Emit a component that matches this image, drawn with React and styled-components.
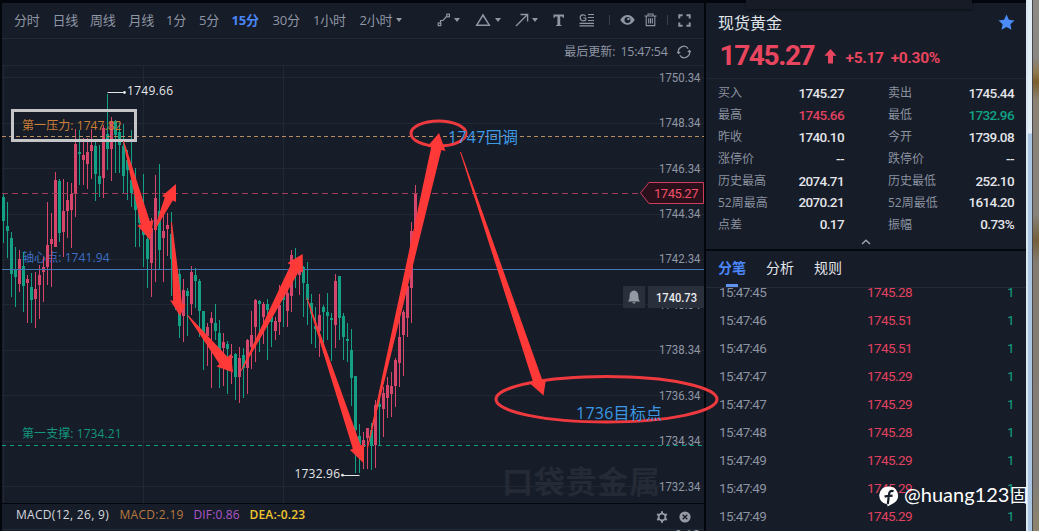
import { Fragment } from "react";
import styled, { createGlobalStyle } from "styled-components";

const periods = [
  { label: "分时", width: 26 },
  { label: "日线", width: 25 },
  { label: "周线", width: 26 },
  { label: "月线", width: 25 },
  { label: "1分", width: 20.5 },
  { label: "5分", width: 20 },
  { label: "15分", width: 28.5, active: true },
  { label: "30分", width: 28 },
  { label: "1小时", width: 34 },
  { label: "2小时", width: 33 },
];

// direction, high, body top, body bottom, low
const candles = [
  ["g", 193, 197, 221, 243], ["g", 202, 226, 231, 258], ["g", 232, 238, 274, 297],
  ["g", 247, 270, 277, 307], ["r", 250, 259, 284, 292], ["g", 252, 266, 286, 312],
  ["r", 275, 279, 283, 323], ["g", 273, 287, 300, 323], ["r", 272, 289, 299, 328],
  ["r", 265, 275, 285, 319], ["r", 257, 267, 272, 302], ["r", 202, 245, 267, 285],
  ["r", 213, 239, 244, 287], ["r", 172, 180, 247, 247], ["g", 179, 181, 233, 242],
  ["r", 179, 211, 232, 257], ["r", 182, 200, 211, 238], ["r", 183, 194, 210, 248],
  ["r", 129, 144, 193, 217], ["g", 130, 152, 154, 185], ["r", 138, 155, 160, 185],
  ["r", 138, 152, 164, 189], ["r", 129, 145, 151, 179], ["g", 142, 146, 174, 201],
  ["g", 145, 176, 184, 197], ["r", 125, 128, 178, 198], ["g", 94, 134, 149, 170],
  ["r", 117, 121, 149, 181], ["g", 120, 121, 135, 173], ["g", 123, 132, 145, 173],
  ["g", 124, 146, 176, 194], ["g", 150, 160, 170, 200], ["g", 130, 180, 193, 207],
  ["g", 168, 188, 210, 247], ["g", 197, 212, 223, 247], ["g", 174, 210, 235, 267],
  ["g", 225, 239, 259, 288], ["r", 218, 228, 263, 297], ["r", 175, 198, 230, 282],
  ["g", 164, 211, 250, 269], ["r", 210, 231, 238, 282], ["r", 213, 225, 229, 256],
  ["g", 212, 234, 259, 296], ["g", 255, 265, 300, 310], ["g", 270, 274, 326, 338],
  ["r", 279, 290, 316, 342], ["g", 288, 291, 296, 336], ["r", 266, 272, 304, 315],
  ["g", 268, 275, 281, 308], ["g", 279, 281, 311, 337], ["g", 311, 311, 335, 370],
  ["r", 323, 327, 336, 366], ["r", 312, 318, 323, 388], ["g", 304, 323, 331, 340],
  ["g", 320, 333, 357, 388], ["r", 333, 342, 348, 386], ["g", 341, 344, 349, 394],
  ["r", 344, 356, 358, 384], ["g", 353, 354, 377, 400], ["r", 347, 358, 377, 403],
  ["g", 348, 355, 368, 398], ["r", 339, 340, 368, 394], ["r", 311, 335, 347, 369],
  ["r", 299, 300, 327, 362], ["g", 300, 301, 304, 352], ["r", 302, 304, 317, 344],
  ["g", 299, 304, 310, 360], ["g", 307, 316, 322, 347], ["r", 317, 321, 331, 340],
  ["r", 285, 305, 322, 335], ["g", 283, 295, 300, 327], ["r", 277, 293, 311, 327],
  ["r", 250, 255, 296, 312], ["g", 248, 263, 270, 288], ["r", 257, 260, 275, 295],
  ["g", 266, 267, 283, 317], ["g", 262, 284, 300, 325], ["g", 294, 303, 314, 344],
  ["g", 307, 326, 329, 348], ["r", 294, 315, 331, 357], ["g", 305, 307, 312, 353],
  ["g", 293, 312, 316, 340], ["g", 313, 318, 320, 361], ["r", 274, 281, 325, 348],
  ["g", 276, 276, 318, 340], ["g", 313, 316, 337, 360], ["g", 323, 339, 341, 362],
  ["g", 329, 350, 378, 406], ["g", 376, 376, 430, 473], ["g", 424, 436, 445, 473],
  ["r", 432, 440, 447, 469], ["r", 428, 428, 438, 469], ["g", 423, 430, 445, 470],
  ["r", 400, 405, 445, 468], ["g", 390, 404, 407, 445], ["r", 387, 393, 409, 437],
  ["r", 377, 385, 398, 418], ["r", 372, 386, 394, 417], ["r", 358, 360, 386, 407],
  ["r", 315, 337, 363, 387], ["r", 310, 312, 335, 376], ["r", 283, 286, 318, 337],
  ["r", 222, 231, 288, 323], ["r", 185, 193, 237, 253],
];

const axisPrices = [
  "1750.34", "1748.34", "1746.34", "1744.34", "1742.34",
  "1740.34", "1738.34", "1736.34", "1734.34", "1732.34",
];

// tail, left barb, tip, right barb
const arrows = [
  [[123, 141], [137.5, 225.5], [150, 240], [153.5, 220]],
  [[154, 230], [162, 196], [176, 184], [176, 202]],
  [[171, 222], [170, 300], [180, 316], [185.5, 304.5]],
  [[187, 315], [216.5, 366.5], [233, 372.5], [231, 354]],
  [[240.5, 371], [287.5, 263], [302.7, 254], [303, 272.7]],
  [[306.5, 298], [350, 450], [364, 463.5], [364, 444]],
  [[367, 448], [427.5, 146.5], [439, 133], [445.5, 151]],
  [[460, 152], [530, 383.5], [543.5, 395.5], [546, 379]],
];

const quotes = [
  ["买入", "1745.27", "", "卖出", "1745.44", ""],
  ["最高", "1745.66", "#e0425f", "最低", "1732.96", "#12a183"],
  ["昨收", "1740.10", "", "今开", "1739.08", ""],
  ["涨停价", "--", "", "跌停价", "--", ""],
  ["历史最高", "2074.71", "", "历史最低", "252.10", ""],
  ["52周最高", "2070.21", "", "52周最低", "1614.20", ""],
  ["点差", "0.17", "", "振幅", "0.73%", ""],
];

const ticks = [
  ["15:47:45", "1745.28"],
  ["15:47:46", "1745.51"],
  ["15:47:46", "1745.51"],
  ["15:47:47", "1745.29"],
  ["15:47:47", "1745.29"],
  ["15:47:48", "1745.28"],
  ["15:47:49", "1745.29"],
  ["15:47:49", "1745.29"],
  ["15:47:49", "1745.29"],
];

const colors = { r: "#d6456a", g: "#14a085" };

function arrowPoints([tail, left, tip, right]) {
  const mix = (t) => [
    left[0] + (right[0] - left[0]) * t,
    left[1] + (right[1] - left[1]) * t,
  ];
  const tailEnd = [tail[0] + 1, tail[1]];
  return [tail, mix(0.2), left, tip, right, mix(0.77), tailEnd]
    .map((p) => p.join(","))
    .join(" ");
}

function DrawingTools() {
  return (
    <Tools>
      <Tool $width={28} $gap={3}>
        <svg width="14" height="14" fill="none" stroke="currentColor" strokeWidth="1.2">
          <path d="M3.5 10.5V7.5H6L9.5 3.5" />
          <rect x="1.2" y="10" width="2.6" height="2.6" />
          <rect x="9.8" y="1.2" width="2.6" height="2.6" />
        </svg>
        <Caret />
      </Tool>
      <Tool $width={30} $gap={4}>
        <svg width="16" height="14" fill="none" stroke="currentColor" strokeWidth="1.5">
          <path d="M8 2L14.3 12.2H1.7Z" />
        </svg>
        <Caret />
      </Tool>
      <Tool $width={28} $gap={3}>
        <svg width="14" height="14" fill="none" stroke="currentColor" strokeWidth="1.4">
          <path d="M1 13L12.5 1.5M5.5 1.5H12.6V8.5" />
        </svg>
        <Caret />
      </Tool>
      <Tool $width={16}>
        <svg width="12" height="14" fill="currentColor">
          <path d="M0.5 1.5H11V4.8H9.8L9.3 3.4H7.2V11.8L8.6 12.3V13H3V12.3L4.4 11.8V3.4H2.2L1.7 4.8H0.5Z" />
        </svg>
      </Tool>
      <Tool $width={20}>
        <svg width="16" height="14" fill="none" stroke="currentColor" strokeWidth="1.2">
          <path d="M6.6 3.2C5.9 1.6 1.2 0.8 1.2 4.8C1.2 8.4 5.2 8.3 6.8 7V5H4.3M9 1.5H15M9 4.5H15M9 7.5H15M0.5 10.3H15M0.5 12.8H15" />
        </svg>
      </Tool>
      <Separator />
      <Tool $width={14}>
        <svg width="15" height="12" viewBox="0 0 15 12">
          <path fill="currentColor" d="M0.3 6C3.8-0.8 11.2-0.8 14.7 6C11.2 12.4 3.8 12.4 0.3 6Z" />
          <circle cx="7.5" cy="6" r="3" fill="#161c28" />
          <circle cx="8.4" cy="5" r="1.3" fill="currentColor" />
        </svg>
      </Tool>
      <Tool $width={13}>
        <svg width="13" height="14" fill="none" stroke="currentColor" strokeWidth="1.1">
          <path d="M0.5 3H12.5M4 2.8V1H9V2.8M2.2 3V12.6H10.8V3M4.7 5.2V10.6M6.5 5.2V10.6M8.3 5.2V10.6" />
        </svg>
      </Tool>
      <Separator />
      <Tool $width={13}>
        <svg width="13" height="13" fill="none" stroke="currentColor" strokeWidth="2">
          <path d="M1.3 4.6V1.3H4.6M8.4 1.3H11.7V4.6M11.7 8.4V11.7H8.4M4.6 11.7H1.3V8.4" />
        </svg>
      </Tool>
    </Tools>
  );
}

function CandleChart() {
  return (
    <ChartSvg width="702" height="438" viewBox="2 65 702 438">
      {/* Grid */}
      <g stroke="#212834" shapeRendering="crispEdges">
        <line x1="2" x2="704" y1="65.5" y2="65.5" />
        {axisPrices.map((price, i) => (
          <line key={price} x1="2" x2="704" y1={77.7 + i * 45.45} y2={77.7 + i * 45.45} />
        ))}
        {[3.5, 143.5, 283.5].map((x) => (
          <line key={x} x1={x} x2={x} y1="65" y2="503" />
        ))}
      </g>
      <Watermark x="502" y="493" textLength="158">口袋贵金属</Watermark>

      {axisPrices.map((price, i) => (
        <AxisText key={price} x="659" y={81.6 + i * 45.45} textLength="41.5" lengthAdjust="spacingAndGlyphs">
          {price}
        </AxisText>
      ))}

      <LevelText x="22" y="262" fill="#3e6fc4" textLength="87.5">轴心点: 1741.94</LevelText>

      {/* Candles sit every 4px */}
      <g shapeRendering="crispEdges">
        {candles.map(([dir, high, top, bottom, low], i) => (
          <g key={i} fill={colors[dir]}>
            <rect x={3 + i * 4} y={high} width="1" height={low - high} />
            <rect x={2 + i * 4} y={top} width="3" height={bottom - top} />
          </g>
        ))}
      </g>

      <LevelText x="22" y="129.5" fill="#cc7f35" textLength="99.5">第一压力: 1747.82</LevelText>
      <LevelText x="22" y="438" fill="#14957e" textLength="99.5">第一支撑: 1734.21</LevelText>

      <path d="M2 136.5H704" stroke="#b98d62" strokeDasharray="4 3" />
      <path d="M2 193.5H640" stroke="#a23b59" strokeDasharray="6 4" />
      <path d="M2 269.5H704" stroke="#4479b4" />
      <path d="M2 445.5H704" stroke="#169c85" strokeDasharray="4 4" />

      <path d="M107.5 92.5H124" stroke="#e4e6ea" />
      <circle cx="124.5" cy="92.5" r="1.4" fill="#e4e6ea" />
      <LevelText x="127" y="95" fill="#e4e6ea" textLength="46">1749.66</LevelText>
      <path d="M342 475.5H359.5" stroke="#e4e6ea" />
      <circle cx="342.5" cy="475.2" r="1.4" fill="#e4e6ea" />
      <LevelText x="294.5" y="478" fill="#e4e6ea" textLength="45.5">1732.96</LevelText>

      {/* Current price */}
      <path d="M640.5 193L649 182.5H703.5V203.5H649Z" fill="#29101b" stroke="#cf3d5e" />
      <AxisText x="654" y="198" fill="#f0506c" textLength="44.5">1745.27</AxisText>

      {/* Cursor price with alert */}
      <rect x="623" y="286" width="22" height="22" fill="#2a303b" />
      <path
        d="M634 290.5C630.7 290.8 629.6 293.4 629.6 296.5C629.6 299.5 628.8 300.3 627.8 301.5H640.2C639.2 300.3 638.4 299.5 638.4 296.5C638.4 293.4 637.3 290.8 634 290.5ZM632.3 302.3H635.7C635.3 304 632.7 304 632.3 302.3Z"
        fill="#949aa4"
      />
      <rect x="648" y="286" width="56" height="22" fill="#2a303b" />
      <AxisText x="656" y="301.8" fill="#e9ebee" fontWeight="500" textLength="41" lengthAdjust="spacingAndGlyphs">
        1740.73
      </AxisText>
    </ChartSvg>
  );
}

function Annotations() {
  return (
    <Overlay width="1039" height="531">
      <rect x="12.5" y="110.5" width="123" height="30" fill="none" stroke="#c5c5c7" strokeWidth="3" />
      <g fill="none" stroke="#ee3a3f" strokeWidth="3">
        <ellipse cx="438.5" cy="133.5" rx="27.5" ry="12.5" />
        <ellipse cx="606.5" cy="399.3" rx="110.5" ry="22.7" />
      </g>
      <NoteText x="448" y="143" textLength="70">1747回调</NoteText>
      <NoteText x="576" y="418.5" textLength="86">1736目标点</NoteText>
      <g fill="#ff3838">
        {arrows.map((arrow, i) => (
          <polygon key={i} points={arrowPoints(arrow)} />
        ))}
      </g>
    </Overlay>
  );
}

function QuotePanel() {
  return (
    <Quote>
      <QuoteHeader>
        <TitleRow>
          <span>现货黄金</span>
          <svg width="17" height="17" viewBox="0 0 24 24" fill="#4a8bf6">
            <path d="M12 0.8L15.4 8L23.3 9L17.5 14.4L19 22.2L12 18.4L5 22.2L6.5 14.4L0.7 9L8.6 8Z" />
          </svg>
        </TitleRow>
        <PriceRow>
          <Price>1745.27</Price>
          <svg width="13" height="15" fill="#e8455e">
            <path d="M6.5 0L12.6 6.7H9V14.5H4V6.7H0.4Z" />
          </svg>
          <Change>+5.17</Change>
          <Change>+0.30%</Change>
        </PriceRow>
      </QuoteHeader>
      <QuoteGrid>
        {quotes.map(([label, value, color, label2, value2, color2]) => (
          <Fragment key={label}>
            <QuoteCell>
              <QuoteLabel>{label}</QuoteLabel>
              <QuoteValue $color={color}>{value}</QuoteValue>
            </QuoteCell>
            <QuoteCell>
              <QuoteLabel>{label2}</QuoteLabel>
              <QuoteValue $color={color2}>{value2}</QuoteValue>
            </QuoteCell>
          </Fragment>
        ))}
      </QuoteGrid>
      <Collapse>
        <svg width="10" height="6" fill="none" stroke="#a3a8b1" strokeWidth="1.4">
          <path d="M1 5L5 1.2L9 5" />
        </svg>
      </Collapse>
      <Tabs>
        <Tab $active>分笔</Tab>
        <Tab>分析</Tab>
        <Tab>规则</Tab>
      </Tabs>
      <TickList>
        {ticks.map(([time, price], i) => (
          <TickRow key={i}>
            <TickTime>{time}</TickTime>
            <TickPrice>{price}</TickPrice>
            <TickCount>1</TickCount>
          </TickRow>
        ))}
      </TickList>
    </Quote>
  );
}

export default function App() {
  return (
    <>
      <GlobalStyle />
      <Page>
        <ChartPanel>
          <Toolbar>
            {periods.map(({ label, width, active }) => (
              <Period key={label} $width={width} $active={active}>{label}</Period>
            ))}
            <PeriodCaret />
            <DrawingTools />
          </Toolbar>
          <UpdateRow>
            <span>最后更新:</span>
            <UpdateTime>15:47:54</UpdateTime>
            <svg width="14" height="14" fill="none" stroke="currentColor" strokeWidth="1.2">
              <path d="M1.6 8.2A5.4 5.4 0 0 1 11.2 3.6M12.4 5.8A5.4 5.4 0 0 1 2.8 10.4M0.2 7L1.6 8.5L3.2 7M10.8 7L12.4 5.5L13.8 7" />
            </svg>
          </UpdateRow>
          <CandleChart />
          <MacdBar>
            <MacdItem $width={103.5} $color="#d5d8dd" $spacing={0.3}>MACD(12, 26, 9)</MacdItem>
            <MacdItem $width={74} $color="#b7793f" $spacing={0.3}>MACD:2.19</MacdItem>
            <MacdItem $width={56} $color="#ae56c9" $spacing={0.15}>DIF:0.86</MacdItem>
            <MacdItem $width={60} $color="#f0c52e" $spacing={0.15} $weight={600}>DEA:-0.23</MacdItem>
            <MacdActions>
              <svg width="12" height="12" viewBox="0 0 12 12" fill="none" stroke="currentColor">
                <circle cx="6" cy="6" r="3.4" strokeWidth="1.8" />
                <path strokeWidth="2" d="M6 0.3V2.4M6 9.6V11.7M1.1 3.1L2.9 4.2M9.1 7.8L10.9 8.9M1.1 8.9L2.9 7.8M9.1 4.2L10.9 3.1" />
              </svg>
              <svg width="12" height="12" viewBox="0 0 12 12">
                <circle cx="6" cy="6" r="5.6" fill="currentColor" />
                <path d="M3.7 3.7L8.3 8.3M8.3 3.7L3.7 8.3" stroke="#161c28" strokeWidth="1.3" />
              </svg>
            </MacdActions>
          </MacdBar>
          <MacdFoot>9.18</MacdFoot>
        </ChartPanel>
        <QuotePanel />
        <WindowEdge />
        <Desktop />
        <TopPopup />
        <Annotations />
        <Credit>
          <svg width="20" height="22" viewBox="0 0 20 22">
            <path fill="#fff" d="M10 1.5A9 9 0 0 1 14.5 18.3L8.5 21.5V19.5A9 9 0 0 1 10 1.5Z" />
            <path
              d="M14.6 6.2C11.6 5.2 10.4 6.6 10.1 9L8.8 19M5.6 11.6C8 10.8 11 10.9 13.6 10.6"
              fill="none"
              stroke="#161c28"
              strokeWidth="2.2"
            />
          </svg>
          <CreditName>@huang123</CreditName>
          <CreditTail>固</CreditTail>
        </Credit>
      </Page>
    </>
  );
}

// Styled components
const GlobalStyle = createGlobalStyle`
  * {
    box-sizing: border-box;
  }

  body {
    margin: 0;
    overflow: hidden;
    background: #03060d;
    font-family: "Open Sans", "Noto Sans CJK SC", sans-serif;
  }

  svg {
    display: block;
    flex: none;
  }
`;

const Page = styled.div`
  position: relative;
  display: grid;
  grid-template-columns: 702px 322px 7px 6px;
  width: 1039px;
  height: 531px;
  padding-left: 2px;
  overflow: hidden;
`;

const ChartPanel = styled.div`
  display: flex;
  flex-direction: column;
  height: 531px;
  padding-top: 3px;
  overflow: hidden;
  white-space: nowrap;
`;

const Toolbar = styled.div`
  display: flex;
  align-items: center;
  flex: none;
  gap: 12.5px;
  height: 36px;
  padding: 0 13px 1px 12px;
  background: #161c28;
  border-bottom: 1px solid #222936;
`;

const Period = styled.span`
  flex: none;
  width: ${(p) => p.$width}px;
  font-size: 13px;
  line-height: 18px;
  letter-spacing: -0.2px;
  font-weight: ${(p) => (p.$active ? 700 : 400)};
  color: ${(p) => (p.$active ? "#4a86f7" : "#8f96a4")};
`;

const Caret = styled.i`
  width: 0;
  height: 0;
  border: 3px solid transparent;
  border-top: 4px solid #8f96a4;
  border-bottom: 0;
`;

const PeriodCaret = styled(Caret)`
  margin-left: -9px;
`;

const Tools = styled.div`
  display: flex;
  align-items: center;
  gap: 10px;
  margin-left: auto;
  color: #8f96a4;
`;

const Tool = styled.div`
  display: flex;
  align-items: center;
  flex: none;
  gap: ${(p) => p.$gap || 0}px;
  width: ${(p) => p.$width}px;
`;

const Separator = styled.div`
  width: 1px;
  height: 10px;
  background: #3a414e;
`;

const UpdateRow = styled.div`
  display: flex;
  align-items: center;
  justify-content: flex-end;
  flex: none;
  height: 26px;
  padding-right: 13px;
  font-size: 12px;
  line-height: 18px;
  color: #8f96a4;
  background: #161c28;

  svg {
    margin-left: 9px;
  }
`;

const UpdateTime = styled.span`
  width: 47.5px;
  margin-left: 5px;
  font-size: 12.5px;
  letter-spacing: -0.3px;
`;

const ChartSvg = styled.svg`
  background: #161c28;
`;

const AxisText = styled.text`
  font-family: Roboto, sans-serif;
  font-size: 13px;
  fill: ${(p) => p.fill || "#8f96a4"};
`;

const LevelText = styled.text`
  font-size: 12px;
`;

const Watermark = styled.text`
  font-family: "Noto Sans CJK SC", sans-serif;
  font-size: 31px;
  font-weight: 700;
  fill: #242a36;
`;

const NoteText = styled.text`
  font-size: 16px;
  fill: #3c98e4;
`;

const Overlay = styled.svg`
  position: absolute;
  top: 0;
  left: 0;
  pointer-events: none;
`;

const MacdBar = styled.div`
  display: flex;
  align-items: center;
  flex: none;
  height: 25px;
  margin-top: 1px;
  padding: 0 13px 4px 14px;
  background: #161c28;
`;

const MacdItem = styled.span`
  flex: none;
  width: ${(p) => p.$width}px;
  font-size: 12px;
  line-height: 17px;
  font-weight: ${(p) => p.$weight || 400};
  letter-spacing: ${(p) => p.$spacing}px;
  color: ${(p) => p.$color};
`;

const MacdActions = styled.div`
  display: flex;
  gap: 11px;
  margin-left: auto;
  padding-top: 4px;
  color: #969ba5;
`;

const MacdFoot = styled.div`
  flex: none;
  height: 6px;
  padding-right: 4px;
  overflow: hidden;
  border-top: 1px solid #222936;
  background: #161c28;
  text-align: right;
  font: 13px/9px Roboto, sans-serif;
  color: #8f96a4;
`;

const Quote = styled.div`
  display: flex;
  flex-direction: column;
  height: 528px;
  margin: 3px 0 0 2px;
  overflow: hidden;
  background: #161c28;
`;

const QuoteHeader = styled.div`
  flex: none;
  height: 76px;
  padding: 8px 11px 0 12px;
  border-bottom: 1px solid #202733;
`;

const TitleRow = styled.div`
  display: flex;
  align-items: center;
  justify-content: space-between;
  height: 23px;
  font-size: 16px;
  line-height: 22px;
  color: #dfe2e7;
`;

const PriceRow = styled.div`
  display: flex;
  align-items: center;
  height: 43px;
  padding-left: 1.5px;
  font-family: Roboto, sans-serif;
  color: #e8455e;

  svg {
    margin-top: 1px;
  }
`;

const Price = styled.span`
  width: 104px;
  font-size: 28px;
  font-weight: 700;
  letter-spacing: -1.4px;
`;

const Change = styled.span`
  margin: 4px 0 0 7px;
  font-size: 15.5px;
  font-weight: 700;
  letter-spacing: -0.3px;

  svg + & {
    margin-left: 9px;
  }
`;

const QuoteGrid = styled.div`
  display: grid;
  grid-template-columns: 126px 126px;
  column-gap: 44px;
  grid-auto-rows: 21.9px;
  flex: none;
  padding: 3px 12px 0;
`;

const QuoteCell = styled.div`
  display: flex;
  align-items: center;
  justify-content: space-between;
  line-height: 20px;
`;

const QuoteLabel = styled.span`
  padding-top: 1px;
  font-size: 12px;
  color: #8b92a0;
`;

const QuoteValue = styled.span`
  font-family: Roboto, sans-serif;
  font-size: 13.5px;
  font-weight: 500;
  letter-spacing: -0.6px;
  color: ${(p) => p.$color || "#e3e5e9"};
`;

const Collapse = styled.div`
  display: flex;
  justify-content: center;
  flex: none;
  height: 16px;
  padding-top: 4px;
  border-bottom: 2px solid #05080f;
`;

const Tabs = styled.div`
  display: flex;
  gap: 20px;
  flex: none;
  height: 37px;
  padding: 7px 12px 0;
  border-bottom: 1px solid #252c38;
`;

const Tab = styled.div`
  width: 28px;
  font-size: 14px;
  line-height: 20px;
  font-weight: ${(p) => (p.$active ? 700 : 400)};
  color: ${(p) => (p.$active ? "#4a86f7" : "#e3e5e9")};

  &::after {
    content: "";
    display: block;
    width: 12px;
    height: 3px;
    margin: 6px auto 0;
    background: ${(p) => (p.$active ? "#5e93f0" : "transparent")};
  }
`;

const TickList = styled.div`
  flex: 1;
  overflow: hidden;
`;

const TickRow = styled.div`
  display: grid;
  grid-template-columns: 148px 60px 1fr;
  align-items: center;
  height: 28px;
  padding: 0 13px;
  font-family: Roboto, sans-serif;
  font-size: 13.5px;
  letter-spacing: -0.6px;

  &:first-child {
    margin-top: -10px;
  }
`;

const TickTime = styled.span`
  color: #8b92a0;
`;

const TickPrice = styled.span`
  color: #e0425f;
`;

const TickCount = styled.span`
  margin-right: -1px;
  text-align: right;
  color: #12a183;
`;

const WindowEdge = styled.div`
  border-left: 2px solid #dbe7f2;
  border-right: 1px solid #45484e;
  background: linear-gradient(#e3edf6 0, #e3edf6 133px, #a9c5e2 134px);
`;

const Desktop = styled.div`
  background: linear-gradient(
    #8e8b87 0,
    #8a8681 58px,
    #8f7a50 72px,
    #7c5e2b 82px,
    #8b8274 100px,
    #87827b 215px,
    #75603a 240px,
    #857c70 262px,
    #827e79 480px,
    #8d846c 531px
  );
`;

const TopPopup = styled.div`
  position: absolute;
  top: 0;
  left: 746px;
  width: 226px;
  height: 9px;
  background: #161b26;
  box-shadow: 0 1px 3px rgba(0, 0, 0, 0.5);
`;

const Credit = styled.div`
  position: absolute;
  top: 483px;
  left: 879px;
  display: flex;
  align-items: center;
  width: 149px;
  height: 26px;
  overflow: hidden;
  color: #fff;
`;

const CreditName = styled.span`
  width: 107px;
  margin: -4px 0 0 5px;
  font-family: Lato, sans-serif;
  font-size: 20px;
  line-height: 26px;
`;

const CreditTail = styled.span`
  margin-top: -4px;
  font-family: "Noto Sans CJK SC", sans-serif;
  font-size: 18px;
  line-height: 26px;
`;
